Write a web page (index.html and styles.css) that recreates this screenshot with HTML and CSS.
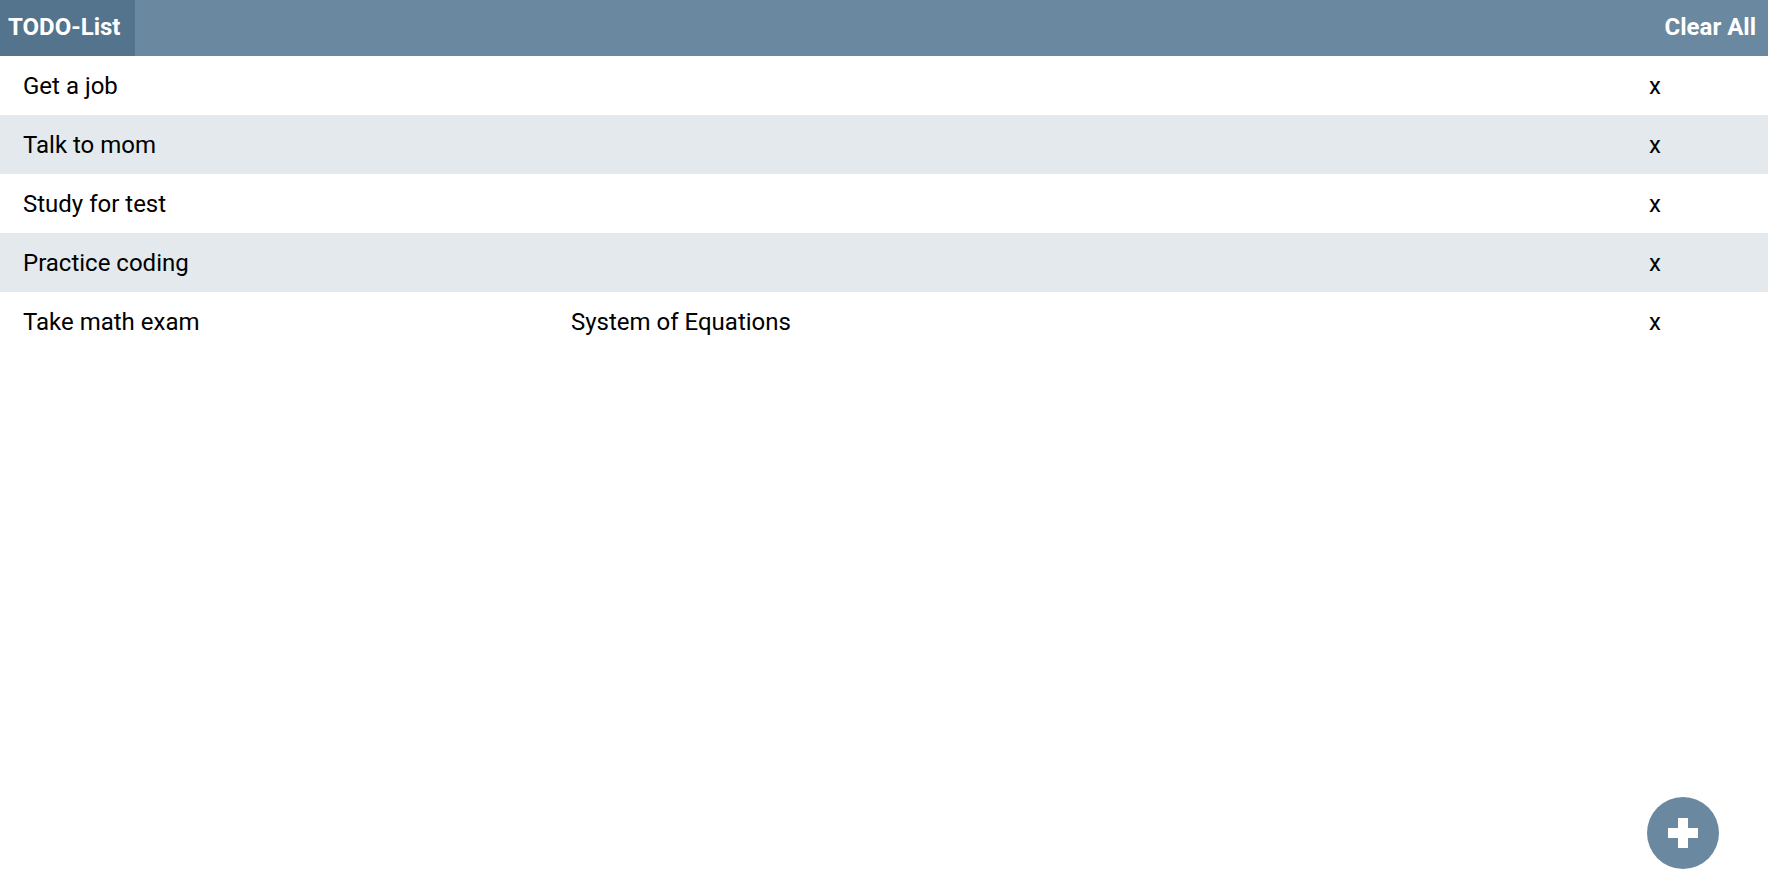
FILE: index.html
```html
<!DOCTYPE html>
<html>
<head>
<meta charset="utf-8">
<link rel="stylesheet" href="styles.css">
</head>
<body>
<header class="topbar">
  <div class="title">TODO-List</div>
  <div class="clear">Clear All</div>
</header>
<ul class="list">
  <li class="item"><span class="name">Get a job</span><span class="desc"></span><span class="del">x</span></li>
  <li class="item"><span class="name">Talk to mom</span><span class="desc"></span><span class="del">x</span></li>
  <li class="item"><span class="name">Study for test</span><span class="desc"></span><span class="del">x</span></li>
  <li class="item"><span class="name">Practice coding</span><span class="desc"></span><span class="del">x</span></li>
  <li class="item"><span class="name">Take math exam</span><span class="desc">System of Equations</span><span class="del">x</span></li>
</ul>
<button class="fab" aria-label="Add">
  <svg width="30" height="30" viewBox="0 0 30 30"><rect x="10" y="0" width="10" height="30" fill="#fff"/><rect x="0" y="10" width="30" height="10" fill="#fff"/></svg>
</button>
</body>
</html>
```
FILE: styles.css
```css
html, body {
  margin: 0;
  padding: 0;
  background: #fff;
  font-family: Roboto, "Liberation Sans", sans-serif;
}
.topbar {
  display: flex;
  justify-content: space-between;
  align-items: stretch;
  height: 56px;
  background: #6a88a0;
  color: #fff;
  font-weight: 700;
  font-size: 24px;
}
.title {
  display: flex;
  align-items: center;
  padding: 0 15px 2px 8px;
  background: #54738d;
}
.clear {
  display: flex;
  align-items: center;
  padding: 0 12px 2px 0;
}
.list {
  list-style: none;
  margin: 0;
  padding: 0;
}
.item {
  display: grid;
  grid-template-columns: 548px 1fr 119px;
  align-items: center;
  height: 59px;
  padding-left: 23px;
  font-size: 24px;
  color: #000;
}
.item:nth-child(even) {
  background: #e4e9ed;
}
.fab {
  position: fixed;
  right: 49px;
  bottom: 19px;
  width: 72px;
  height: 72px;
  border-radius: 50%;
  border: none;
  padding: 0;
  background: #6a88a0;
  display: flex;
  align-items: center;
  justify-content: center;
}
```
